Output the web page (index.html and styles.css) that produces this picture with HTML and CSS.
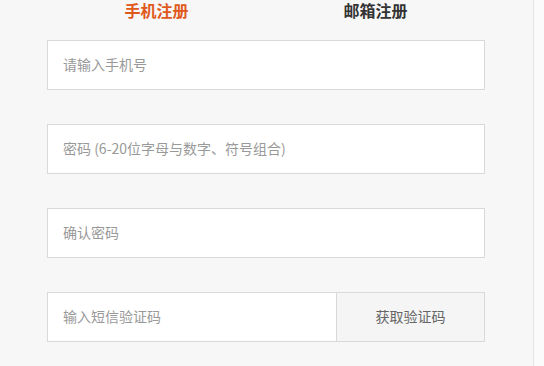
FILE: index.html
```html
<!DOCTYPE html>
<html lang="zh-CN">
<head>
    <meta charset="UTF-8">
    <meta name="viewport" content="width=device-width, initial-scale=1.0">
    <title>注册</title>
    <link rel="stylesheet" href="styles.css">
</head>
<body>
    <div class="page">
        <div class="register">
            <div class="tabs">
                <div class="tab active">手机注册</div>
                <div class="tab">邮箱注册</div>
            </div>

            <form class="form">
                <div class="field">
                    <input type="text" placeholder="请输入手机号">
                </div>
                <div class="field">
                    <input type="password" placeholder="密码 (6-20位字母与数字、符号组合)">
                </div>
                <div class="field">
                    <input type="password" placeholder="确认密码">
                </div>
                <div class="field code">
                    <input type="text" placeholder="输入短信验证码">
                    <button type="button" class="code-btn">获取验证码</button>
                </div>
            </form>
        </div>
    </div>
</body>
</html>
```

FILE: styles.css
```css
body {
    margin: 0;
    background-color: #fbfbfb;
    font-family: "Noto Sans CJK SC", "Liberation Sans", sans-serif;
}

.page {
    width: 533px;
    height: 366px;
    background-color: #f7f7f7;
    border-right: 1px solid #e4e4e4;
    overflow: hidden;
}

.register {
    width: 438px;
    margin-left: 47px;
}

.tabs {
    display: flex;
    height: 20px;
    margin-bottom: 20px;
}

.tab {
    flex: 1;
    text-align: center;
    font-size: 16px;
    font-weight: bold;
    line-height: 20px;
    color: #333;
}

.tab.active {
    color: #e0591c;
}

.field {
    display: flex;
    height: 50px;
    box-sizing: border-box;
    border: 1px solid #d9d9d9;
    background-color: #fff;
    margin-bottom: 34px;
}

.field input {
    flex: 1;
    min-width: 0;
    border: none;
    outline: none;
    padding: 0 15px 2px;
    font-family: inherit;
    font-size: 14px;
    color: #333;
    background: transparent;
}

.field input::placeholder {
    color: #999;
}

.code-btn {
    width: 148px;
    border: none;
    border-left: 1px solid #d9d9d9;
    background-color: #f5f5f5;
    font-family: inherit;
    font-size: 14px;
    color: #666;
    padding: 0 0 2px;
}
```
